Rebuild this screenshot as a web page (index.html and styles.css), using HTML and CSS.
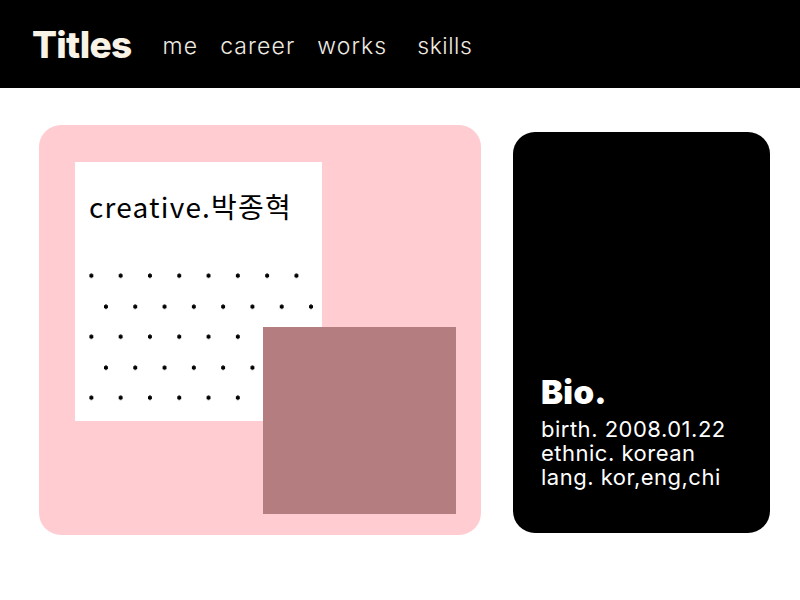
FILE: index.html
```html
<!DOCTYPE html>
<html lang="ko">
<head>
<meta charset="utf-8">
<title>Titles</title>
<link rel="stylesheet" href="styles.css">
</head>
<body>
<header class="topbar">
  <h1 class="brand">Titles</h1>
  <nav class="nav">
    <a class="nav-link" href="#me">me</a>
    <a class="nav-link" href="#career">career</a>
    <a class="nav-link" href="#works">works</a>
    <a class="nav-link nav-link--last" href="#skills">skills</a>
  </nav>
</header>
<main class="content">
  <section class="hero-card">
    <div class="paper">
      <p class="paper-title">creative.박종혁</p>
      <div class="dots"></div>
    </div>
    <div class="swatch"></div>
  </section>
  <aside class="bio-card">
    <h2 class="bio-title">Bio.</h2>
    <p class="bio-text">birth. 2008.01.22<br>ethnic. korean<br>lang. kor,eng,chi</p>
  </aside>
</main>
</body>
</html>
```
FILE: styles.css
```css
* { box-sizing: border-box; }
html, body { margin: 0; padding: 0; background: #fff; }
body { font-family: "Inter", "Noto Sans CJK KR", sans-serif; }

.topbar {
  height: 88px;
  background: #000;
  display: flex;
  align-items: center;
  padding-left: 32px;
}
.brand {
  margin: 0;
  font-family: "Inter", sans-serif;
  font-weight: 800;
  font-size: 37px;
  letter-spacing: -0.7px;
  color: #f8f3e6;
  line-height: 1;
}
.nav {
  display: flex;
  gap: 22px;
  margin-left: 31px;
  margin-top: 5px;
}
.nav-link {
  font-family: "Inter", sans-serif;
  font-weight: 300;
  font-size: 23px;
  letter-spacing: 1.1px;
  color: #eeeae0;
  text-decoration: none;
  line-height: 1;
}
.nav-link--last { margin-left: 8px; letter-spacing: 0.5px; }

.content {
  display: flex;
  align-items: flex-start;
  gap: 32px;
  padding: 37px 0 0 39px;
}

.hero-card {
  position: relative;
  width: 442px;
  height: 410px;
  background: #ffccd2;
  border-radius: 22px;
  padding: 37px 0 0 36px;
}
.paper {
  width: 247px;
  height: 259px;
  background: #fff;
  padding: 26px 0 0 14px;
}
.paper-title {
  margin: 0;
  font-family: "Noto Sans CJK KR", sans-serif;
  font-size: 28px;
  font-weight: 400;
  letter-spacing: 1.2px;
  color: #000;
  line-height: 36px;
  white-space: nowrap;
}
.dots {
  margin: 38px 0 0 -5px;
  width: 236px;
  height: 150px;
  background-image:
    radial-gradient(circle, #000 1.9px, transparent 2.4px),
    radial-gradient(circle, #000 1.9px, transparent 2.4px);
  background-size: 29.3px 61px, 29.3px 61px;
  background-position: -7.3px -16.8px, 7.3px 14.2px;
}
.swatch {
  position: absolute;
  left: 224px;
  top: 202px;
  width: 193px;
  height: 187px;
  background: #b47d80;
}

.bio-card {
  margin-top: 7px;
  width: 257px;
  height: 401px;
  background: #000;
  border-radius: 22px;
  color: #fff;
  display: flex;
  flex-direction: column;
  justify-content: flex-end;
  padding: 0 0 44px 28px;
}
.bio-title {
  margin: 0 0 7px;
  font-family: "Inter", sans-serif;
  font-weight: 900;
  font-size: 33px;
  letter-spacing: 0.3px;
  line-height: 36px;
}
.bio-text {
  margin: 0;
  font-family: "Inter", sans-serif;
  font-size: 22px;
  line-height: 24px;
  letter-spacing: 0.5px;
  font-weight: 400;
}
```
